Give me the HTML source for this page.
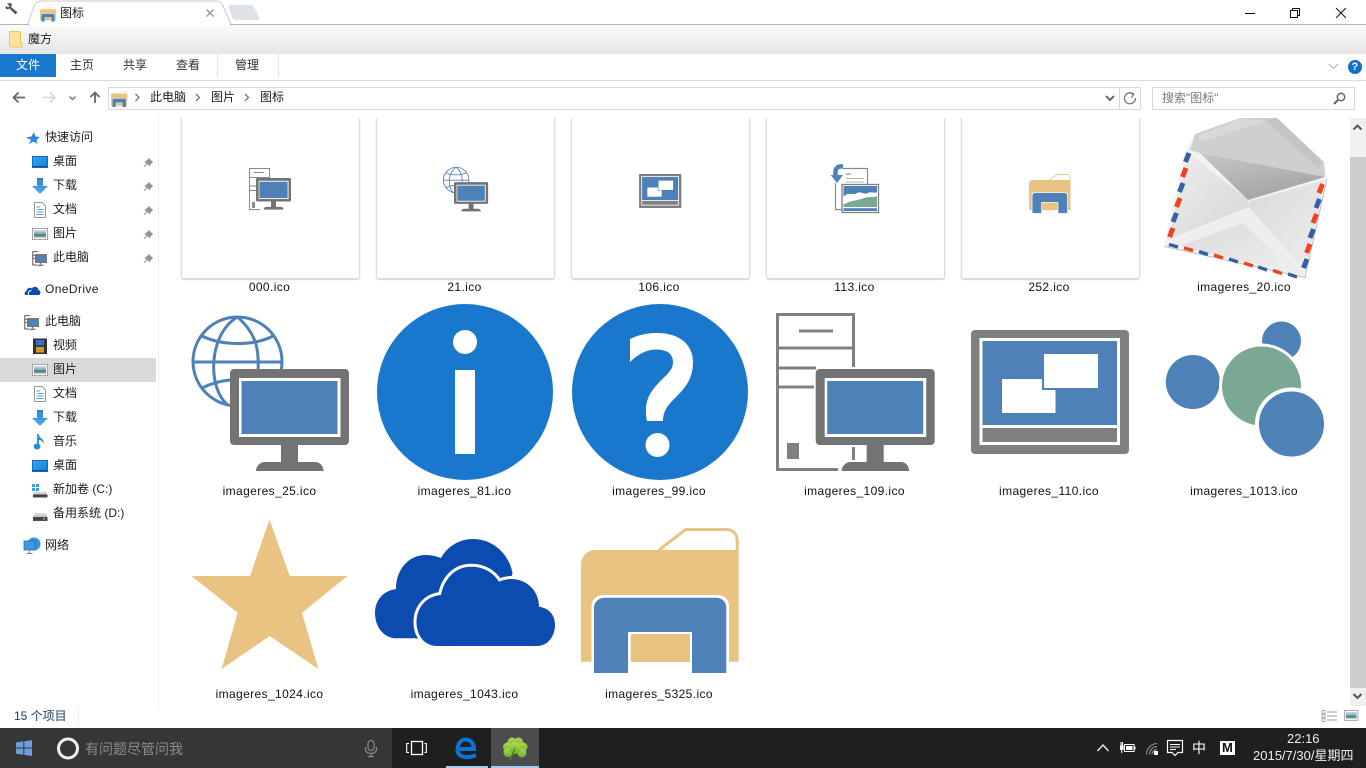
<!DOCTYPE html>
<html><head><meta charset="utf-8"><title>图标</title>
<style>
html,body{margin:0;padding:0;width:1366px;height:768px;overflow:hidden;background:#fff}
body{position:relative;font-family:"Liberation Sans","Noto Sans CJK SC",sans-serif;color:#1c1c1c}
svg.a{position:absolute;left:0;top:0}
.b{position:absolute}
.t{position:absolute;font-size:12px;line-height:16px;white-space:nowrap}
.l{position:absolute;width:190px;text-align:center;font-size:12px;line-height:16px;letter-spacing:.38px;white-space:nowrap;color:#111}
.c{position:absolute;top:108px;width:177px;height:169px;border:1px solid #dddddd;border-radius:3px;box-shadow:0 1px 1px #d4d4d4,0 0 1px #d4d4d4}
</style></head><body>
<!-- chrome backgrounds -->
<div class="b" style="left:0;top:25px;width:1366px;height:29px;background:linear-gradient(#fbfbfb,#e6e6e6)"></div>
<div class="b" style="left:0;top:24px;width:1366px;height:1px;background:#b4b4b4"></div>
<div class="b" style="left:0;top:54px;width:56px;height:23px;background:#1a78cc"></div>
<div class="b" style="left:217px;top:54px;width:1px;height:23px;background:#e2e2e2"></div>
<div class="b" style="left:278px;top:54px;width:1px;height:23px;background:#e2e2e2"></div>
<div class="b" style="left:0;top:80px;width:1366px;height:1px;background:#dcdcdc"></div>
<!-- sidebar -->
<div class="b" style="left:158px;top:118px;width:1px;height:588px;background:#eeeeee"></div>
<div class="b" style="left:0;top:358px;width:156px;height:24px;background:#d9d9d9"></div>
<!-- cards -->
<div class="c" style="left:180.500px"></div>
<div class="c" style="left:375.500px"></div>
<div class="c" style="left:570.500px"></div>
<div class="c" style="left:765.500px"></div>
<div class="c" style="left:960.500px"></div>
<!-- mask above content -->
<div class="b" style="left:159px;top:81px;width:1207px;height:37px;background:#fff"></div>
<div class="b" style="left:108px;top:87px;width:1031px;height:21px;border:1px solid #d9d9d9"></div>
<div class="b" style="left:1119px;top:87px;width:1px;height:22px;background:#d9d9d9"></div>
<div class="b" style="left:1152px;top:87px;width:201px;height:21px;border:1px solid #d9d9d9"></div>
<!-- scrollbar -->
<div class="b" style="left:1350px;top:118px;width:16px;height:588px;background:#f0f0f0"></div>
<div class="b" style="left:1350px;top:157px;width:16px;height:531px;background:#cdcdcd"></div>
<!-- taskbar -->
<div class="b" style="left:0;top:728px;width:392px;height:40px;background:#363636"></div>
<div class="b" style="left:392px;top:728px;width:974px;height:40px;background:#1f1f1f"></div>
<div class="b" style="left:491px;top:728px;width:48px;height:40px;background:#4c4c4c"></div>
<div class="b" style="left:446px;top:766px;width:42px;height:2px;background:#a6cbf2"></div>
<div class="b" style="left:491px;top:766px;width:48px;height:2px;background:#a6cbf2"></div>

<svg class="a" width="1366" height="768" viewBox="0 0 1366 768" xmlns="http://www.w3.org/2000/svg">
<defs>
<linearGradient id="sky" x1="0" y1="0" x2="0" y2="1"><stop offset="0" stop-color="#cfe4f0"/><stop offset=".55" stop-color="#6f9fb8"/><stop offset=".6" stop-color="#3f6b58"/><stop offset="1" stop-color="#c8d8d0"/></linearGradient>
<linearGradient id="desk" x1="0" y1="0" x2="1" y2="1"><stop offset="0" stop-color="#3aa6f0"/><stop offset="1" stop-color="#1080dc"/></linearGradient>
<linearGradient id="dl" x1="0" y1="0" x2="0" y2="1"><stop offset="0" stop-color="#2f7fd8"/><stop offset="1" stop-color="#55a8ee"/></linearGradient>
<linearGradient id="env1" x1="0" y1="0" x2="1" y2="1"><stop offset="0" stop-color="#eeeeee"/><stop offset="1" stop-color="#d6d6d6"/></linearGradient>
<linearGradient id="env2" x1="0" y1="0" x2=".6" y2="1"><stop offset="0" stop-color="#c6c6c6"/><stop offset="1" stop-color="#a4a4a4"/></linearGradient>
<linearGradient id="env3" x1="0" y1="0" x2="1" y2="1"><stop offset="0" stop-color="#dadada"/><stop offset="1" stop-color="#eeeeee"/></linearGradient>
<linearGradient id="drv" x1="0" y1="0" x2="0" y2="1"><stop offset="0" stop-color="#e4e4e4"/><stop offset=".5" stop-color="#c0c0c0"/><stop offset=".55" stop-color="#333"/><stop offset="1" stop-color="#555"/></linearGradient>
<linearGradient id="clv" x1="0" y1="0" x2="0" y2="1"><stop offset="0" stop-color="#b2dc50"/><stop offset="1" stop-color="#6cae2e"/></linearGradient>

<g id="mon">
<path d="M234 369H345a4 4 0 0 1 4 4V441a4 4 0 0 1-4 4H298V462H315C320 462 323.500 466 323.500 471H256C256 466 260 462 265 462H281V445H234a4 4 0 0 1-4-4V373a4 4 0 0 1 4-4Z" fill="#737373"/>
<rect x="239" y="378" width="101.500" height="59" fill="#fff"/>
<rect x="241.500" y="381" width="96" height="53" fill="#4d81b8"/>
</g>
<g id="i25">
<g fill="none" stroke="#4d81b8" stroke-width="3">
<circle cx="237.500" cy="361.500" r="44.500"/>
<path d="M237.500 317C207 335 208 390 228 405M237.500 317C258 335 259 352 258 372"/>
<path d="M193 362H283M202 336C222 346 254 346 273 336M202 388C210 384 220 381 230 380"/>
</g>
<use href="#mon"/>
</g>
<g id="i109">
<g fill="none" stroke="#808080" stroke-width="3">
<path d="M853.500 367V314.500H777.500V469.500H838"/>
<path d="M777 348H854M777 368H816M777 387H814M799 331H833M853.500 447V460"/>
</g>
<rect x="787" y="443" width="12" height="16" fill="#808080"/>
<use href="#mon" transform="translate(585.700 0)"/>
</g>
<g id="i110">
<rect x="971" y="330" width="158" height="124" rx="4" fill="#808080"/>
<rect x="979.500" y="338" width="140.500" height="107" fill="#fff"/>
<rect x="982.500" y="341" width="134.500" height="84" fill="#4d81b8"/>
<rect x="982.500" y="428" width="134.500" height="14" fill="#808080"/>
<rect x="1044" y="354" width="54" height="34" fill="#fff"/>
<path d="M1002 379H1042V390H1055.500V413H1002Z" fill="#fff"/>
</g>
<g id="i5325">
<path d="M659 550L685.600 529.500H726C733 529.500 737.200 534 737.200 541V552" fill="none" stroke="#e9c382" stroke-width="3"/>
<path d="M596 550H738.700V661.700H581V565C581 556 587 550 596 550Z" fill="#e9c382"/>
<path d="M591.500 673V606C591.500 599 597 595 604 595H717C724 595 729 599 729 606V673Z" fill="#fff"/>
<path d="M594 673V608C594 602 599 597.700 605 597.700H716C722 597.700 726.300 602 726.300 608V673H692V632H628V673Z" fill="#4d81b8"/>
<path d="M628 673V634a2 2 0 0 1 2-2H690a2 2 0 0 1 2 2V673Z" fill="#fff"/>
<rect x="630.700" y="634" width="59.300" height="28" fill="#e9c382"/>
</g>
<g id="spc">
<path d="M6 1H.7V14.500H5M.7 5H6M.7 8H5" fill="none" stroke="#777" stroke-width="1.200"/>
<rect x="3" y="3.500" width="12" height="9" fill="#777"/>
<rect x="4.500" y="5" width="9" height="6" fill="#4d81b8"/>
<path d="M8.500 12.500V14M5.500 14.800H11.500" stroke="#777" stroke-width="1.400"/>
</g>
<g id="sdesk"><rect x=".5" y=".5" width="15" height="11" fill="url(#desk)" stroke="#0c6cc0"/><rect x="1" y="10" width="14" height="1" fill="#0a4f90"/></g>
<g id="sdl"><path d="M5 0H11V8H16L8 16L0 8H5Z" fill="url(#dl)"/></g>
<g id="sdoc"><path d="M.5.500H8L11.500 4V15.500H.5Z" fill="#fff" stroke="#9a9a9a"/><path d="M2.500 5H6M3.500 7.500H9.500M2.500 10H9.500M2.500 12.500H9.500" stroke="#4d9ad8"/></g>
<g id="spic"><rect x=".5" y=".5" width="15" height="11" fill="#fff" stroke="#a3a3a3"/><rect x="2" y="2" width="12" height="8" fill="url(#sky)"/></g>
<g id="scloud"><path d="M5 10H2C0 10 0 6.500 2.500 6C3 3 6 2 8 3.500C10 .5 14 1.500 14.500 5C16 5.500 17 7 16 9C15.500 10 15 10 14 10Z" fill="#0c4bb0"/><path d="M5 10C3.500 8 5 5.500 7.500 5.500" fill="none" stroke="#fff"/></g>
<g id="pin"><path d="M3 4L6 1L10 5L7 8L7 9.500L4.500 7L1.500 10L.5 9.500L3.500 6.500L1.500 4.500Z" fill="#8d98a2"/></g>
</defs>

<!-- title bar / tab -->
<path d="M28 24L34 6Q36 1 41 1H217Q221 1 223 6L231 24" fill="#fff" stroke="#c9c9c9"/>
<rect x="29" y="24" width="201" height="1.500" fill="#fff"/>
<path d="M229 5H250Q253 5 255 9L260 20H236Q233 20 232 17L229 9Q228 5 229 5Z" fill="#dfe3e8"/>
<path d="M7 3.500L10.500 3L12 4.500L11 7L17.500 12.300L15.500 14.500L9.500 8.500L7 9.500L5.500 8L6 5.500L8 7.500L9.500 6Z" fill="#555"/>
<use href="#i5325" transform="translate(-18 -45.800) scale(.1)"/>
<path d="M206.500 9.500L213.500 16.500M213.500 9.500L206.500 16.500" stroke="#9a9a9a" stroke-width="1.500"/>
<!-- window controls -->
<path d="M1245 13.500H1255" stroke="#111"/>
<path d="M1290.500 10.500H1297.500V17.500H1290.500ZM1292.500 10V8.500H1299.500V15.500H1298" fill="none" stroke="#111"/>
<path d="M1336 8L1346 18M1346 8L1336 18" stroke="#111"/>
<!-- ribbon folder -->
<path d="M9.500 31.500H18.500Q20.500 31.500 20.500 33.500V43H22V47H11.500Q9.500 47 9.500 45Z" fill="#fbe59a" stroke="#e8c460"/>
<path d="M1329 64L1333.500 68.500L1338 64" fill="none" stroke="#b0b0b0"/>
<circle cx="1355" cy="67" r="7" fill="#0f6fca"/>
<!-- nav buttons -->
<path d="M25 97.500H14.500M18.500 92.500L13.500 97.500L18.500 102.500" fill="none" stroke="#666" stroke-width="1.700"/>
<path d="M43 97.500H54M50 92.500L55 97.500L50 102.500" fill="none" stroke="#d8d8d8" stroke-width="1.700"/>
<path d="M69.500 96.500L72.500 99.500L75.500 96.500" fill="none" stroke="#777" stroke-width="1.500"/>
<path d="M95 103V92.500M90.500 97L95 92.500L99.500 97" fill="none" stroke="#666" stroke-width="1.800"/>
<use href="#i5325" transform="translate(51.200 33) scale(.103 .11)" />
<path d="M135.500 94L139 97.500L135.500 101M196 94L199.500 97.500L196 101M245 94L248.500 97.500L245 101" fill="none" stroke="#777" stroke-width="1.300"/>
<path d="M1106 96L1110 100L1114 96" fill="none" stroke="#555" stroke-width="1.700"/>
<path d="M1134 94.500A5.500 5.500 0 1 0 1135.500 98M1130 92.500L1133.500 94.800L1131.500 97.500" fill="none" stroke="#777" stroke-width="1.300"/>
<circle cx="1341" cy="97" r="3.700" fill="none" stroke="#666" stroke-width="1.500"/><path d="M1338 100L1334 104" stroke="#666" stroke-width="2"/>

<!-- sidebar icons -->
<path d="M34 132L35.500 136.500L40 137L36.500 140L37.500 144L33.500 141.500L29 144L31 140L26 137.500L31.500 136.500Z" fill="#2e86dc"/>
<use href="#sdesk" x="32" y="156"/><use href="#sdl" x="32" y="178"/><use href="#sdoc" x="34" y="202"/><use href="#spic" x="32" y="228"/><use href="#spc" x="32" y="250.500"/>
<use href="#pin" x="143" y="157"/><use href="#pin" x="143" y="181"/><use href="#pin" x="143" y="205"/><use href="#pin" x="143" y="229"/><use href="#pin" x="143" y="253"/>
<use href="#scloud" x="24" y="285"/><use href="#spc" x="24" y="314.500"/>
<rect x="33" y="338.500" width="14" height="15.500" fill="#333"/><rect x="36" y="340" width="8" height="5.500" fill="#3a6fd0"/><rect x="36" y="347" width="8" height="5.500" fill="#d09a30"/>
<use href="#spic" x="32" y="364"/><use href="#sdoc" x="34" y="386"/><use href="#sdl" x="32" y="410"/>
<path d="M38 434V447" stroke="#1e8fe6" stroke-width="1.800"/><ellipse cx="37" cy="446.500" rx="3.400" ry="3" fill="#1e8fe6"/><path d="M38 434C39 438 44 438 44 444C42 440 40 440 38 440Z" fill="#1e8fe6"/>
<use href="#sdesk" x="32" y="460"/>
<rect x="32" y="484" width="3" height="3" fill="#2ea6e8"/><rect x="36" y="484" width="3" height="3" fill="#2ea6e8"/><rect x="32" y="488" width="3" height="3" fill="#2ea6e8"/><rect x="36" y="488" width="3" height="3" fill="#2ea6e8"/>
<path d="M34 491.500H46L47.500 495V497.500H33V495Z" fill="url(#drv)"/>
<path d="M35 513H46L47.500 517V521H33V517Z" fill="url(#drv)"/><rect x="43" y="518" width="2" height="1.500" fill="#5fd06a"/>
<circle cx="34" cy="544" r="6.500" fill="#3d90d8"/><rect x="24" y="541" width="11" height="9" fill="#3a9ae4" stroke="#2a6fb0" stroke-width=".8"/><path d="M29.500 550V553M26.500 553.500H32.500" stroke="#7a8a9a"/>

<!-- small card icons -->
<!-- 000 -->
<path d="M269.500 178V168.500H249.500V209.500H260M249.500 177.500H269.500M249.500 186H256M249.500 190.500H256M254 172.500H264" fill="none" stroke="#8a8a8a" stroke-width="1"/>
<rect x="252" y="202" width="3" height="6" fill="#8a8a8a"/>
<use href="#mon" transform="translate(188.400 63.600) scale(.294 .31)"/>
<use href="#i25" transform="translate(388.100 76.400) scale(.2866)"/>
<use href="#i110" transform="translate(378.800 83.600) scale(.268 .274)"/>
<!-- 113 -->
<path d="M843 168.500H867.500V184M835.500 183V209.500H842" fill="none" stroke="#8a8a8a" stroke-width="1.200"/>
<path d="M846 178.500H864M846 182H864" stroke="#b5b5b5" stroke-width="1"/><path d="M846 174H851" stroke="#4d81b8" stroke-width="1"/>
<rect x="842" y="184.500" width="36.500" height="28" fill="#fff" stroke="#808080" stroke-width="1.300"/>
<rect x="843.500" y="186" width="33.500" height="25" fill="#4d81b8"/>
<path d="M843.500 197C848 191 853 196 857 193C861 191 864 195 868 193C872 191 875 194 877 192V204H843.500Z" fill="#fff"/>
<path d="M843.500 205C850 200 857 201 864 198C870 196 873 198 877 196V207H843.500Z" fill="#7aa895"/>
<rect x="843.500" y="207" width="33.500" height="1.200" fill="#fff"/>
<path d="M843 166.500C838 166 835.500 168 835.500 172V178" fill="none" stroke="#4d81b8" stroke-width="4.500"/>
<path d="M830.700 175L837 183L843 175Z" fill="#4d81b8"/>
<use href="#i5325" transform="translate(876.200 32.100) scale(.263 .269)"/>

<!-- envelope -->
<polygon points="1185,151 1195,134 1240,118 1277,118 1324,162 1327,179 1305,277 1164,246" fill="#f2f2f2"/>
<polygon points="1190,150 1195,134 1240,118 1277,118 1324,162 1325,177 1200,153" fill="#cfcfcf"/>
<polygon points="1198,136 1200,142 1265,121 1240,119" fill="#d9d9d9"/>
<polygon points="1265,120 1277,118 1323,162 1318,168" fill="#c4c4c4"/>
<polygon points="1200,153 1325,177 1248,200" fill="url(#env2)"/>
<polygon points="1188,152 1248,200 1249,207 1168,240" fill="url(#env1)"/>
<polygon points="1325,180 1250,201 1249,207 1305,272" fill="url(#env3)"/>
<polygon points="1164,246 1249,207 1305,276" fill="#eeeeee"/>
<polygon points="1180,246 1243,223 1294,272" fill="url(#env3)"/>
<path d="M1164 246.500L1305 277.500L1327 179" fill="none" stroke="#b4b4b4" stroke-width=".8"/>
<g stroke-width="5" fill="none">
<g stroke="#3560a8"><path d="M1189 153L1185.500 162M1183 183L1179.500 192M1176.500 213L1173 222M1319.500 199L1316 208M1313.500 229L1310 238M1307 259L1303.500 268"/></g>
<g stroke="#f5401c"><path d="M1186 168L1182.500 177M1180 198L1176.500 207M1173 228L1169.500 237M1322.500 184L1319 193M1316.500 214L1313 223M1310 244L1306.500 253"/></g>
</g>
<g stroke-width="3.500" fill="none">
<g stroke="#3560a8"><path d="M1169 244.500L1178 247M1199 251.500L1208 254.500M1229 259L1238 262M1258 267L1267 270M1288 274L1297 277"/></g>
<g stroke="#f5401c"><path d="M1184 248L1193 250.500M1214 255L1223 258M1244 263L1253 266M1273 270.500L1282 273.500"/></g>
</g>

<!-- large icons -->
<use href="#i25"/>
<circle cx="465" cy="392" r="88" fill="#1a78cc"/>
<circle cx="465" cy="342" r="12" fill="#fff"/>
<rect x="455" y="370" width="20" height="84" fill="#fff"/>
<circle cx="660" cy="392" r="88" fill="#1a78cc"/>
<path d="M630 339C640 334 650 333 657 333C680 333 693 345 693 362C693 378 686 387 677 396C669 404 663 410 663 421H647C644 407 647 396 655 387C664 376 673 372 673 362C673 353 666 349.500 656 349.500C647 349.500 638 354 630 362Z" fill="#fff"/>
<circle cx="657.500" cy="445" r="12" fill="#fff"/>
<use href="#i109"/>
<use href="#i110"/>
<circle cx="1281.500" cy="341" r="19.500" fill="#4d81b8"/>
<circle cx="1192.800" cy="382" r="27" fill="#4d81b8"/>
<circle cx="1261.500" cy="386" r="41" fill="#7aa895" stroke="#fff" stroke-width="3"/>
<circle cx="1291.500" cy="424" r="34.500" fill="#4d81b8" stroke="#fff" stroke-width="4"/>
<polygon points="269.500,519.500 289.700,576 347.600,576 302,612.700 318.300,669 269.700,636 221.600,669 237.700,612.700 191.500,576 250,576" fill="#e9c382"/>
<path d="M414.600 638.300H396C384 638.300 375 627 375 613C375 600 383 591 396 589C396 570 408 555 426 555C431 555 436 556 441 558C447 547 459 539 473 539C493 539 509 554 512.500 573L500 620L430 640Z" fill="#0c4bb0"/>
<path d="M437 646H537C548 646 555 636 555 625C555 615 549 608 539 606.700C539 591 527 579 511 579C507 579 503 580 499 581.700C493 572 483 566.700 471 566.700C455 566.700 444 579 441 595C427 596 416.500 607 416.500 622C416.500 636 425 646 437 646Z" fill="#0c4bb0" stroke="#fff" stroke-width="6" paint-order="stroke"/>
<use href="#i5325"/>

<!-- scrollbar chevrons -->
<path d="M1353.500 129.500L1357.500 125.500L1361.500 129.500" fill="none" stroke="#555" stroke-width="2"/>
<path d="M1353.500 694L1357.500 698L1361.500 694" fill="none" stroke="#555" stroke-width="2"/>
<!-- view buttons -->
<path d="M1322 710.500h3v3h-3zM1322 714.500h3v3h-3zM1322 718.500h3v3h-3z" fill="none" stroke="#9a9a9a" stroke-width=".8"/>
<path d="M1327 712H1337M1327 716H1337M1327 720H1337" stroke="#9a9a9a"/>
<use href="#spic" transform="translate(1344 710) scale(.9)"/>
<path d="M78.500 706V726" stroke="#eeeeee"/>

<!-- taskbar icons -->
<path d="M16 742.500L23.300 741.300V747.500H16ZM24.300 741.200L32 740V747.500H24.300ZM16 748.500H23.300V754.700L16 753.700ZM24.300 748.500H32V756L24.300 754.900Z" fill="#6a9fdc"/>
<circle cx="68" cy="748.500" r="9.500" fill="none" stroke="#f0f0f0" stroke-width="3"/>
<rect x="368" y="740.500" width="6" height="10" rx="3" fill="none" stroke="#8a8a8a" stroke-width="1.200"/><path d="M365.500 747V749C365.500 752 368 753.500 371 753.500C374 753.500 376.500 752 376.500 749V747M371 753.500V756.500M368 756.500H374" fill="none" stroke="#8a8a8a" stroke-width="1.200"/>
<rect x="411.500" y="741.500" width="11" height="13" fill="none" stroke="#fff" stroke-width="1.300"/>
<path d="M409 743.500H406.700V752.500H409M424.500 743.500H426.300V752.500H424.500" fill="none" stroke="#fff" stroke-width="1.100"/>
<path d="M459 749H474C474 743 470 739.500 466 739.500C460 739.500 457.500 745 457.500 750C457.500 755 462 757 467 757C470 757 473 756.500 476 755" fill="none" stroke="#0a74d2" stroke-width="4"/>
<g fill="url(#clv)">
<circle cx="512" cy="742" r="4.500"/><circle cx="518.500" cy="742" r="4.500"/>
<circle cx="523" cy="747" r="4.500"/><circle cx="522" cy="753" r="4.500"/>
<circle cx="507.500" cy="747" r="4.500"/><circle cx="508" cy="752.500" r="4.500"/>
<circle cx="515" cy="748" r="6"/>
</g>
<path d="M515 748L510 760" stroke="#4f8a20" stroke-width="1.400"/>
<!-- tray -->
<path d="M1097.500 751L1103 745L1108.500 751" fill="none" stroke="#eee" stroke-width="1.300"/>
<path d="M1120 746H1123.500M1121 742V746M1122.500 742V746M1121.700 750V753" stroke="#fff" stroke-width="1.100"/><rect x="1120" y="746" width="3.600" height="4" fill="#fff"/>
<rect x="1124.500" y="744.500" width="9.500" height="7" fill="none" stroke="#fff"/><rect x="1126" y="746" width="6.500" height="4" fill="#fff"/><rect x="1134" y="746.500" width="1.500" height="3" fill="#fff"/>
<path d="M1146.500 754.500A11 11 0 0 1 1157 743.500M1149.500 754.500A8 8 0 0 1 1157 746.500M1152 754.500A5 5 0 0 1 1157 749.500" fill="none" stroke="#999" stroke-width="1"/><rect x="1154" y="751" width="4" height="4" fill="#fff"/>
<path d="M1167.500 740.500H1182.500V752.500H1178L1175 755.500L1172 752.500H1167.500Z" fill="none" stroke="#fff" stroke-width="1.200"/><path d="M1170 744.500H1180M1170 747H1180M1170 749.500H1176" stroke="#fff" stroke-width=".9"/>
<rect x="1220" y="741" width="15" height="14" fill="#fff"/>
</svg>

<!-- title text -->
<div class="t" style="left:60px;top:5px">图标</div>
<div class="t" style="left:28px;top:31px">魔方</div>
<div class="t" style="left:16px;top:57px;color:#fff">文件</div>
<div class="t" style="left:70px;top:57px;color:#333">主页</div>
<div class="t" style="left:123px;top:57px;color:#333">共享</div>
<div class="t" style="left:176px;top:57px;color:#333">查看</div>
<div class="t" style="left:235px;top:57px;color:#333">管理</div>
<div class="t" style="left:1351.500px;top:59px;color:#fff;font-weight:bold;font-size:11px">?</div>
<div class="t" style="left:150px;top:89px">此电脑</div>
<div class="t" style="left:211px;top:89px">图片</div>
<div class="t" style="left:260px;top:89px">图标</div>
<div class="t" style="left:1162px;top:90px;color:#777">搜索"图标"</div>

<!-- sidebar text -->
<div class="t" style="left:45px;top:129px">快速访问</div>
<div class="t" style="left:53px;top:153px">桌面</div>
<div class="t" style="left:53px;top:177px">下载</div>
<div class="t" style="left:53px;top:201px">文档</div>
<div class="t" style="left:53px;top:225px">图片</div>
<div class="t" style="left:53px;top:249px">此电脑</div>
<div class="t" style="left:45px;top:281px;letter-spacing:.4px">OneDrive</div>
<div class="t" style="left:45px;top:313px">此电脑</div>
<div class="t" style="left:53px;top:337px">视频</div>
<div class="t" style="left:53px;top:361px">图片</div>
<div class="t" style="left:53px;top:385px">文档</div>
<div class="t" style="left:53px;top:409px">下载</div>
<div class="t" style="left:53px;top:433px">音乐</div>
<div class="t" style="left:53px;top:457px">桌面</div>
<div class="t" style="left:53px;top:481px">新加卷 (C:)</div>
<div class="t" style="left:53px;top:505px">备用系统 (D:)</div>
<div class="t" style="left:45px;top:537px">网络</div>

<!-- file labels -->
<div class="l" style="left:174.500px;top:279px">000.ico</div>
<div class="l" style="left:369.500px;top:279px">21.ico</div>
<div class="l" style="left:564px;top:279px">106.ico</div>
<div class="l" style="left:759.500px;top:279px">113.ico</div>
<div class="l" style="left:954px;top:279px">252.ico</div>
<div class="l" style="left:1149px;top:279px">imageres_20.ico</div>
<div class="l" style="left:174.500px;top:483px">imageres_25.ico</div>
<div class="l" style="left:369.500px;top:483px">imageres_81.ico</div>
<div class="l" style="left:564px;top:483px">imageres_99.ico</div>
<div class="l" style="left:759.500px;top:483px">imageres_109.ico</div>
<div class="l" style="left:954px;top:483px">imageres_110.ico</div>
<div class="l" style="left:1149px;top:483px">imageres_1013.ico</div>
<div class="l" style="left:174.500px;top:686px">imageres_1024.ico</div>
<div class="l" style="left:369.500px;top:686px">imageres_1043.ico</div>
<div class="l" style="left:564px;top:686px">imageres_5325.ico</div>

<!-- status -->
<div class="t" style="left:14px;top:708px;color:#1d3c66">15 个项目</div>
<!-- taskbar text -->
<div class="t" style="left:85px;top:740px;font-size:14px;line-height:18px;color:#8e8e8e">有问题尽管问我</div>
<div class="t" style="left:1192px;top:739px;font-size:14px;line-height:18px;color:#fff">中</div>
<div class="t" style="left:1222px;top:740px;font-size:13px;line-height:16px;font-weight:bold;color:#111">M</div>
<div class="t" style="left:1287px;top:731px;font-size:13px;line-height:16px;color:#eee">22:16</div>
<div class="t" style="left:1253px;top:748px;font-size:13px;line-height:16px;color:#eee">2015/7/30/星期四</div>
</body></html>
